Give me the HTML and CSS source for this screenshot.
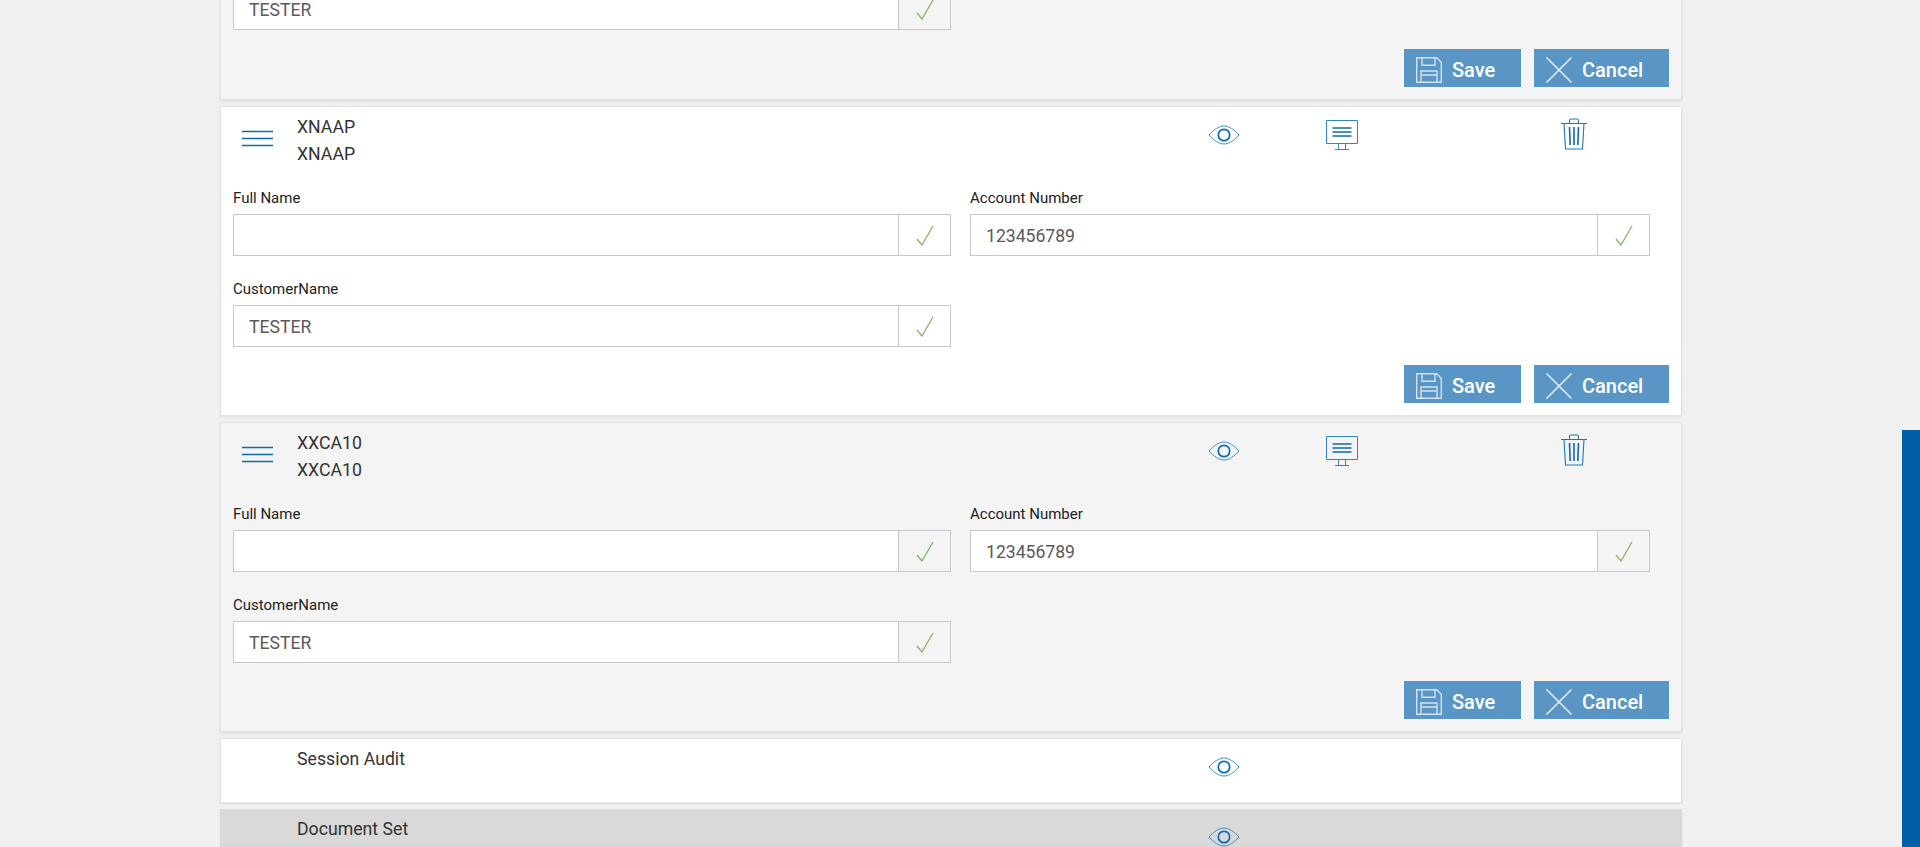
FILE: index.html
```html
<!DOCTYPE html>
<html lang="en">
<head>
<meta charset="utf-8">
<title>Sessions</title>
<link rel="stylesheet" href="styles.css">
</head>
<body>
<svg class="defs" width="0" height="0" aria-hidden="true">
  <symbol id="i-menu" viewBox="0 0 31 20"><path d="M0 2.500h31M0 9.500h31M0 16.500h31" fill="none" stroke="#0f69ad" stroke-width="1.600"/></symbol>
  <symbol id="i-eye" viewBox="0 0 32 20"><path d="M1 10C6 4.500 11 1 16 1S26 4.500 31 10C26 15.500 21 19 16 19S6 15.500 1 10Z" fill="none" stroke="#3d8fc9" stroke-width="1"/><circle cx="16" cy="10" r="5.700" fill="none" stroke="#0f69ad" stroke-width="1.700"/></symbol>
  <symbol id="i-screen" viewBox="0 0 32 30"><path d="M.5.5h31v23H.5zM12.500 23.500v6M19.500 23.500v6M9 29.500h14" fill="none" stroke="#2f86c4" stroke-width="1"/><path d="M6.500 8h19M6.500 12h19M6.500 16h19" fill="none" stroke="#0f69ad" stroke-width="1.500"/></symbol>
  <symbol id="i-trash" viewBox="0 0 28 32"><path d="M1 5.500h26M9.500 5V2.500q0-1.500 1.500-1.500h6q1.500 0 1.500 1.500V5M4 5.500l1.500 25.500h17L24 5.500" fill="none" stroke="#1a78bd" stroke-width="1.100"/><path d="M9.500 9l.7 18M14 9v18M18.500 9l-.7 18" fill="none" stroke="#0f69ad" stroke-width="1.600"/></symbol>
  <symbol id="i-check" viewBox="0 0 18 21"><path d="M1 14l5 6L17 1" fill="none" stroke="#8fb06a" stroke-width="1.300"/></symbol>
  <symbol id="i-save" viewBox="0 0 26 26"><path d="M.7.7h20l4.600 4.600v20H.7zM6 .7v7.600h13V.7M5 25.300V14h16v11.300M5 18h16" fill="none" stroke="#d3e2ef" stroke-width="1.400"/></symbol>
  <symbol id="i-x" viewBox="0 0 26 26"><path d="M.5.5l25 25M25.500.5l-25 25" fill="none" stroke="#e6eff6" stroke-width="1.500"/></symbol>
</svg>
<main class="list">
  <section class="card card-alt card-clipped">
    <div class="form-grid">
      <div class="field field-bare">
        <div class="control"><div class="control-value">TESTER</div><div class="control-check"><svg class="ic-check"><use href="#i-check"/></svg></div></div>
      </div>
    </div>
    <div class="actions">
      <button class="btn btn-save"><svg class="ic-btn"><use href="#i-save"/></svg>Save</button>
      <button class="btn btn-cancel"><svg class="ic-btn"><use href="#i-x"/></svg>Cancel</button>
    </div>
  </section>

  <section class="card">
    <header class="head">
      <svg class="ic-menu"><use href="#i-menu"/></svg>
      <div class="titles"><div class="title">XNAAP</div><div class="title">XNAAP</div></div>
      <svg class="ic-eye"><use href="#i-eye"/></svg>
      <svg class="ic-screen"><use href="#i-screen"/></svg>
      <svg class="ic-trash"><use href="#i-trash"/></svg>
    </header>
    <div class="form-grid">
      <div class="field"><label class="label">Full Name</label>
        <div class="control"><div class="control-value"></div><div class="control-check"><svg class="ic-check"><use href="#i-check"/></svg></div></div></div>
      <div class="field"><label class="label">Account Number</label>
        <div class="control"><div class="control-value">123456789</div><div class="control-check"><svg class="ic-check"><use href="#i-check"/></svg></div></div></div>
      <div class="field"><label class="label">CustomerName</label>
        <div class="control"><div class="control-value">TESTER</div><div class="control-check"><svg class="ic-check"><use href="#i-check"/></svg></div></div></div>
    </div>
    <div class="actions">
      <button class="btn btn-save"><svg class="ic-btn"><use href="#i-save"/></svg>Save</button>
      <button class="btn btn-cancel"><svg class="ic-btn"><use href="#i-x"/></svg>Cancel</button>
    </div>
  </section>

  <section class="card card-alt">
    <header class="head">
      <svg class="ic-menu"><use href="#i-menu"/></svg>
      <div class="titles"><div class="title">XXCA10</div><div class="title">XXCA10</div></div>
      <svg class="ic-eye"><use href="#i-eye"/></svg>
      <svg class="ic-screen"><use href="#i-screen"/></svg>
      <svg class="ic-trash"><use href="#i-trash"/></svg>
    </header>
    <div class="form-grid">
      <div class="field"><label class="label">Full Name</label>
        <div class="control"><div class="control-value"></div><div class="control-check"><svg class="ic-check"><use href="#i-check"/></svg></div></div></div>
      <div class="field"><label class="label">Account Number</label>
        <div class="control"><div class="control-value">123456789</div><div class="control-check"><svg class="ic-check"><use href="#i-check"/></svg></div></div></div>
      <div class="field"><label class="label">CustomerName</label>
        <div class="control"><div class="control-value">TESTER</div><div class="control-check"><svg class="ic-check"><use href="#i-check"/></svg></div></div></div>
    </div>
    <div class="actions">
      <button class="btn btn-save"><svg class="ic-btn"><use href="#i-save"/></svg>Save</button>
      <button class="btn btn-cancel"><svg class="ic-btn"><use href="#i-x"/></svg>Cancel</button>
    </div>
  </section>

  <section class="card card-short">
    <header class="head head-short">
      <span class="ic-menu-space"></span>
      <div class="titles"><div class="title">Session Audit</div></div>
      <svg class="ic-eye"><use href="#i-eye"/></svg>
    </header>
  </section>

  <section class="card card-short card-grey">
    <header class="head head-short">
      <span class="ic-menu-space"></span>
      <div class="titles"><div class="title">Document Set</div></div>
      <svg class="ic-eye"><use href="#i-eye"/></svg>
    </header>
  </section>
</main>
<div class="scroll-thumb"></div>
</body>
</html>
```
FILE: styles.css
```css
* { box-sizing: border-box; }
html, body { margin: 0; height: 100%; overflow: hidden; }
body { background: #f0f0f0; font-family: Roboto, "Liberation Sans", sans-serif; color: #333; }
.defs { position: absolute; }

.list { width: 1462px; margin: -12px 0 0 220px; display: flex; flex-direction: column; gap: 6px; }

.card { background: #fff; border: 1px solid #e3e3e3; box-shadow: 0 1px 2px rgba(0,0,0,.08); height: 310px; padding: 0 12px; }
.card-alt { background: #f4f4f4; }
.card-clipped { height: 112px; border-top: 0; }
.card-short { height: 65px; }
.card-grey { background: #d9d9d9; height: 70px; border: 0; padding-left: 13px; }

.head { height: 81px; display: flex; align-items: flex-start; }
.head-short { height: 62px; }
.ic-menu { width: 31px; height: 20px; margin: 22px 0 0 9px; flex: none; }
.ic-menu-space { width: 31px; margin-left: 9px; flex: none; }
.titles { margin: 7px 0 0 24px; width: 911px; flex: none; }
.title { font-size: 17.700px; line-height: 27px; color: #333; }
.ic-eye { width: 32px; height: 20px; margin-top: 18px; flex: none; }
.ic-screen { width: 32px; height: 30px; margin: 13px 0 0 86px; flex: none; }
.ic-trash { width: 28px; height: 32px; margin: 11px 0 0 202px; flex: none; }

.form-grid { display: grid; grid-template-columns: 718px 680px; column-gap: 19px; row-gap: 23px; }
.field { height: 68px; }
.field-bare { height: 42px; }
.label { display: block; height: 26px; font-size: 15px; line-height: 20px; color: #222; }
.control { display: flex; height: 42px; border: 1px solid #c8c8c8; background: #fff; }
.control-value { flex: 1; padding-left: 15px; font-size: 17.600px; line-height: 42px; color: #5a5a5a; }
.control-check { width: 52px; flex: none; border-left: 1px solid #c8c8c8; display: flex; align-items: center; justify-content: center; background: #fff; }
.card-alt .control-check { background: #f4f4f4; }
.ic-check { width: 18px; height: 21px; }

.actions { display: flex; justify-content: flex-end; gap: 13px; margin-top: 18px; }
.card-clipped .actions { margin-top: 19px; }
.btn { height: 38px; border: 0; padding: 3px 0 0 12px; background: #5a96c5; color: #fff; font: 500 20px Roboto, "Liberation Sans", sans-serif; display: flex; align-items: center; }
.btn-save { width: 117px; }
.btn-cancel { width: 135px; }
.ic-btn { width: 26px; height: 26px; margin-right: 10px; flex: none; }

.scroll-thumb { position: fixed; right: 0; top: 430px; bottom: 0; width: 18px; background: #005ea6; }
```
